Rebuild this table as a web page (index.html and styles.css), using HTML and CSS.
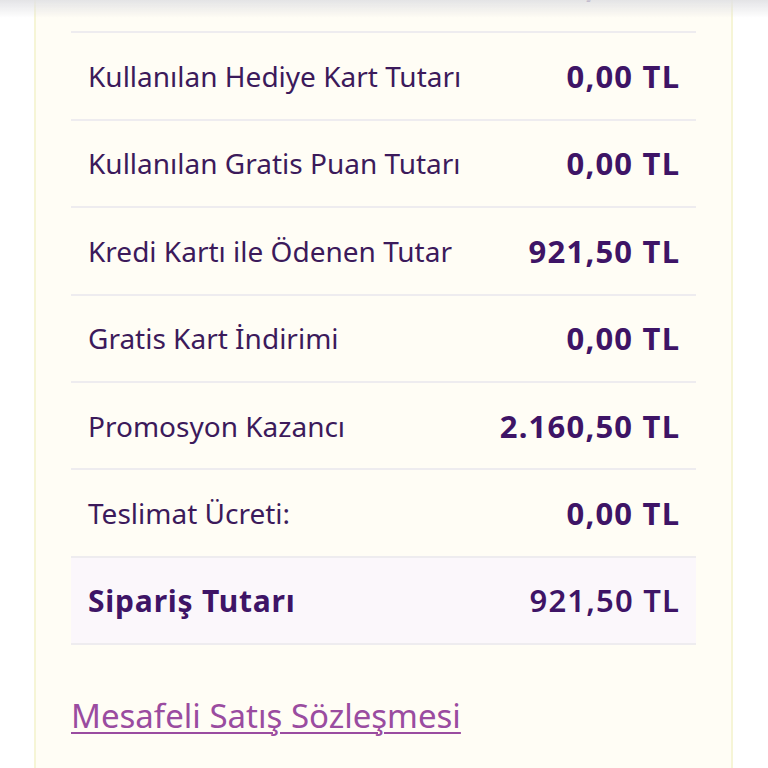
FILE: index.html
```html
<!DOCTYPE html>
<html lang="tr">
<head>
<meta charset="utf-8">
<link rel="stylesheet" href="styles.css">
</head>
<body>
<div class="topshade"></div>
<main class="card">
  <div class="rows">
    <div class="row row-partial"><span class="label"></span><span class="value">0,00 TL</span></div>
    <div class="row"><span class="label">Kullanılan Hediye Kart Tutarı</span><span class="value">0,00 TL</span></div>
    <div class="row"><span class="label">Kullanılan Gratis Puan Tutarı</span><span class="value">0,00 TL</span></div>
    <div class="row"><span class="label">Kredi Kartı ile Ödenen Tutar</span><span class="value">921,50 TL</span></div>
    <div class="row"><span class="label">Gratis Kart İndirimi</span><span class="value">0,00 TL</span></div>
    <div class="row"><span class="label">Promosyon Kazancı</span><span class="value">2.160,50 TL</span></div>
    <div class="row"><span class="label">Teslimat Ücreti:</span><span class="value">0,00 TL</span></div>
    <div class="row row-total"><span class="label">Sipariş Tutarı</span><span class="value">921,50 TL</span></div>
  </div>
  <a class="contract" href="#">Mesafeli Satış Sözleşmesi</a>
</main>
</body>
</html>
```
FILE: styles.css
```css
html, body {
  margin: 0;
  padding: 0;
  background: #ffffff;
  font-family: "Noto Sans", "Lato", sans-serif;
  overflow: hidden;
}
.topshade {
  position: fixed;
  top: 0;
  left: 0;
  right: 0;
  height: 18px;
  background: linear-gradient(to bottom, rgba(225,225,228,0.9), rgba(255,255,255,0));
  z-index: 2;
  pointer-events: none;
}
.card {
  margin: -60.6px 0 0 34px;
  width: 699px;
  box-sizing: border-box;
  border: 2px solid #f6f5d6;
  background: #fffdf5;
  padding: 0 35px 120px;
  height: 1000px;
}
.rows {
  display: flex;
  flex-direction: column;
}
.row {
  display: flex;
  align-items: center;
  justify-content: space-between;
  height: 87.4px;
  box-sizing: border-box;
  padding: 0 17px;
  border-bottom: 2px solid #eeecef;
  color: #3c1a5b;
}
.row-partial {
  height: 92px;
}
.label {
  font-size: 28px;
  font-weight: 400;
  color: #3c1a5b;
}
.value {
  font-size: 31px;
  font-weight: 700;
  letter-spacing: 1.2px;
  margin-right: -1.2px;
  color: #3e1466;
}
.row-total {
  background: #fbf7fb;
}
.row-total .label {
  font-size: 30px;
  font-weight: 700;
  letter-spacing: 0.8px;
  color: #3e1466;
}
.row-total .value {
  font-weight: 600;
}
.contract {
  display: inline-block;
  margin-top: 48px;
  font-size: 33px;
  color: #9a4ca0;
  text-decoration: underline;
  text-underline-offset: 4px;
  text-decoration-thickness: 2px;
}
```
